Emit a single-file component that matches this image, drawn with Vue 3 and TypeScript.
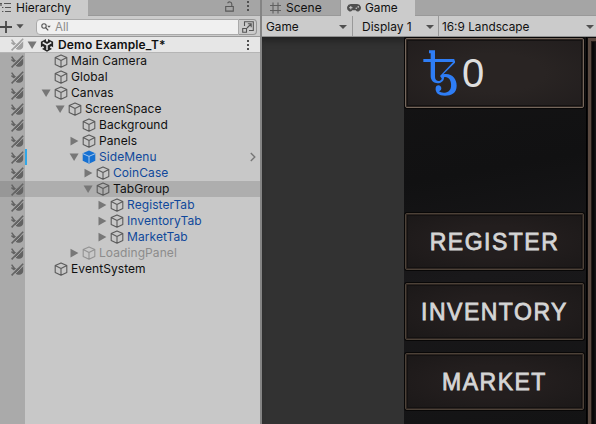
<script setup lang="ts">
interface TreeItem {
  label: string
  depth: number
  arrow?: 'open' | 'closed'
  kind?: 'prefab' | 'link' | 'muted'
  selected?: boolean
}

const items: TreeItem[] = [
  { label: 'Main Camera', depth: 1 },
  { label: 'Global', depth: 1 },
  { label: 'Canvas', depth: 1, arrow: 'open' },
  { label: 'ScreenSpace', depth: 2, arrow: 'open' },
  { label: 'Background', depth: 3 },
  { label: 'Panels', depth: 3, arrow: 'closed' },
  { label: 'SideMenu', depth: 3, arrow: 'open', kind: 'prefab' },
  { label: 'CoinCase', depth: 4, arrow: 'closed', kind: 'link' },
  { label: 'TabGroup', depth: 4, arrow: 'open', selected: true },
  { label: 'RegisterTab', depth: 5, arrow: 'closed', kind: 'link' },
  { label: 'InventoryTab', depth: 5, arrow: 'closed', kind: 'link' },
  { label: 'MarketTab', depth: 5, arrow: 'closed', kind: 'link' },
  { label: 'LoadingPanel', depth: 3, arrow: 'closed', kind: 'muted' },
  { label: 'EventSystem', depth: 1 },
]
const buttons = ['REGISTER', 'INVENTORY', 'MARKET']
</script>

<template>
  <div class="editor">
    <svg class="defs" width="0" height="0">
      <symbol id="pick" viewBox="0 0 13 13">
        <path d="M.6 1.6 4.2 6.4M.4 4.6l3 2.2" fill="none" stroke="currentColor" stroke-width="1.5" />
        <path d="M3 5.2 7.6 5.6 12.2 3v5.2c-.2 2.2-1.8 3.6-4 3.6-2 0-3.6-1-4.2-2.4z" fill="currentColor" />
        <path d="M0 11.4 11 .4" stroke="var(--slash-gap)" stroke-width="1.2" />
        <path d="M.6 12.4 12.2 .8" stroke="currentColor" stroke-width="1.6" />
        <path d="M2.3 12.6 12.8 2.4" stroke="var(--slash-gap)" stroke-width=".9" />
      </symbol>
      <symbol id="cube" viewBox="0 0 14 14">
        <path d="M7 .9 12.8 3.6v6.8L7 13.2 1.2 10.4V3.6zM1.2 3.6 7 6.4l5.8-2.8M7 6.4v6.8" fill="none" stroke="currentColor" stroke-width="1.1" stroke-linejoin="round" />
      </symbol>
      <symbol id="prefab" viewBox="0 0 14 14">
        <path d="M7 .4 13.3 3.2v7.5L7 13.8.7 10.7V3.2z" fill="#1570d2" />
        <path d="M1 3.7 7 6.4l6-2.7M7 6.4v7" fill="none" stroke="#bcd3ec" stroke-width=".9" />
      </symbol>
      <symbol id="down" viewBox="0 0 10 10"><path d="M.6 1.5h9L5.1 9z" fill="currentColor" /></symbol>
      <symbol id="right" viewBox="0 0 10 10"><path d="M1.5.7v8.8L9.4 5.1z" fill="currentColor" /></symbol>
      <symbol id="dots" viewBox="0 0 4 12"><path d="M1 1h2v2H1zM1 5h2v2H1zM1 9h2v2H1z" fill="currentColor" /></symbol>
    </svg>

    <section class="hierarchy">
      <header class="tabs">
        <div class="tab hier-tab">
          <svg width="12" height="11" viewBox="0 0 12 11"><path d="M0 1.5h2M4 1.5h7M2 5.5h1.4M5 5.5h6M2 9.5h1.4M5 9.5h6M1 2v2" stroke="#555" stroke-width="1.2" fill="none" /></svg>
          <span>Hierarchy</span>
        </div>
        <div class="head-tools">
          <svg width="9" height="11" viewBox="0 0 9 11"><path d="M.7 5.5h7.6v4.6H.7zM6.8 5.3V3a2.2 2.2 0 0 0-4.2-.8" fill="none" stroke="#585858" stroke-width="1.1" /></svg>
          <svg class="dots" width="4" height="12"><use href="#dots" /></svg>
        </div>
      </header>
      <div class="search-row">
        <svg class="plus" width="12" height="12" viewBox="0 0 12 12"><path d="M6 0v12M0 6h12" stroke="#484848" stroke-width="1.8" /></svg>
        <svg class="plus-caret" width="8" height="5" viewBox="0 0 8 5"><path d="M.4.3h7.2L4 4.6z" fill="#505050" /></svg>
        <div class="search">
          <svg width="10" height="8" viewBox="0 0 10 8"><circle cx="3" cy="3" r="2.2" fill="none" stroke="#555" stroke-width="1.1" /><path d="m4.6 4.6 2.6 2.8" stroke="#555" stroke-width="1.3" /><path d="M6.2 2.7h3.6L8 4.8z" fill="#555" /></svg>
          <span>All</span>
        </div>
        <div class="picker">
          <svg width="12" height="12" viewBox="0 0 12 12"><path d="M2.5 5V.7h8.8v8.8H7M.7 7.5h3.8v3.8H.7zM5 7l4-4M5.8 2.8h3.4v3.4" fill="none" stroke="#555" stroke-width="1.1" /></svg>
        </div>
      </div>

      <div class="tree">
        <div class="row scene">
          <div class="gutter"><svg class="pick" width="13" height="13"><use href="#pick" /></svg></div>
          <svg class="arrow" width="10" height="10"><use href="#down" /></svg>
          <svg class="unity" width="14" height="14" viewBox="0 0 14 14">
            <path d="M7 .4 13.1 3.7v6.6L7 13.7.9 10.3V3.7z" fill="#242424" />
            <path d="M7 7V12M7 7 2.7 4.5M7 7l4.3-2.5" stroke="#e6e6e6" stroke-width="1.5" />
            <path d="M7 0v3.4M.5 10.7l3.1-1.8M13.5 10.7l-3.1-1.8" stroke="#e6e6e6" stroke-width="2" />
          </svg>
          <span class="label">Demo Example_T*</span>
          <svg class="row-dots" width="4" height="12"><use href="#dots" /></svg>
        </div>
        <div v-for="item in items" :key="item.label" class="row" :class="[item.kind, 'depth-' + item.depth, { selected: item.selected }]">
          <div class="gutter"><svg class="pick" width="13" height="13"><use href="#pick" /></svg></div>
          <div class="arrow">
            <svg v-if="item.arrow" width="10" height="10"><use :href="item.arrow === 'open' ? '#down' : '#right'" /></svg>
          </div>
          <svg class="cube" width="14" height="14"><use :href="item.kind === 'prefab' ? '#prefab' : '#cube'" /></svg>
          <span class="label">{{ item.label }}</span>
          <svg v-if="item.kind === 'prefab'" class="chevron" width="6" height="10" viewBox="0 0 6 10"><path d="m.8 1 4 4-4 4" fill="none" stroke="#777" stroke-width="1.4" /></svg>
        </div>
        <div class="tree-rest"></div>
      </div>
    </section>

    <section class="game">
      <header class="tabs">
        <div class="tab scene-tab">
          <svg width="11" height="12" viewBox="0 0 11 12"><path d="M3 .5v11M8 .5v11M0 3.5h11M0 8.5h11" stroke="#606060" stroke-width="1.1" /></svg>
          <span>Scene</span>
        </div>
        <div class="tab game-tab">
          <svg width="14" height="8" viewBox="0 0 14 8"><path d="M3.8 0h6.4a3.8 3.8 0 0 1 2 7c-1.4.9-2.6.6-3.5-.7H5.3C4.4 7.6 3.2 7.9 1.8 7a3.8 3.8 0 0 1 2-7z" fill="#505050" /><path d="M2.1 3.7h3.4M3.8 2v3.4" stroke="#ccc" stroke-width="1" /><circle cx="9.3" cy="4.3" r=".8" fill="#ccc" /><circle cx="11.2" cy="2.9" r=".8" fill="#ccc" /></svg>
          <span>Game</span>
        </div>
      </header>
      <div class="toolbar">
        <div class="drop mode"><span>Game</span><i></i></div>
        <div class="drop display"><span>Display 1</span><i></i></div>
        <div class="drop aspect"><span>16:9 Landscape</span><i></i></div>
      </div>
      <div class="viewport">
        <div class="menu">
          <div class="plate coin">
            <svg class="tez" width="34" height="46" viewBox="0 0 102 138">
              <path d="M1 31.5h93" fill="none" stroke="#2e7df5" stroke-width="9" />
              <path d="M18 1h18v80c0 12 14 17 20 6v-7h7c3 24-39 29-40-1V10h-5z" fill="#2e7df5" />
              <path d="M96 30v8L61 73c25-5 40 13 40 34 0 22-16 30-35 30-19 0-30-9-28-24 3-12 18-8 17 3-1 6-5 6-7 8 8 7 34 7 36-14 3-24-14-36-28-25l-5-7z" fill="#2e7df5" />
            </svg>
            <span class="amount">0</span>
          </div>
          <div v-for="b in buttons" :key="b" class="plate button"><span>{{ b }}</span></div>
        </div>
        <div class="frame"><div class="frame-inner"></div></div>
      </div>
    </section>
  </div>
</template>

<style>
body { margin: 0; overflow: hidden; }
</style>

<style scoped>
.editor { display: flex; width: 596px; height: 424px; overflow: hidden; background: #848484; font-family: Inter, "Liberation Sans", sans-serif; font-size: 12px; color: #101010; }
.editor * { box-sizing: border-box; }
.defs { position: absolute; }
svg { display: block; flex: none; }
span { white-space: nowrap; }
.hierarchy { display: flex; flex-direction: column; width: 260px; flex: none; margin-right: 2px; background: #c8c8c8; }
.tabs { display: flex; flex: none; height: 16px; background: #a5a5a5; border-bottom: 1px solid #999; }
.tab { display: flex; align-items: center; height: 16px; line-height: 16px; }
.hier-tab { width: 88px; background: #cbcbcb; padding-bottom: 1px; }
.hier-tab span { margin-left: 4px; font-size: 12px; }
.head-tools { display: flex; margin-left: auto; padding: 1px 10px 0 0; gap: 12px; color: #505050; }
.head-tools .dots { margin-top: -1px; }
.search-row { display: flex; flex: none; align-items: center; height: 21px; padding-top: 1px; background: #cbcbcb; border-bottom: 1px solid #999; }
.plus { margin-left: 0; }
.plus-caret { margin-left: 4px; }
.search { display: flex; align-items: center; height: 16px; width: 203px; margin-left: 12px; padding-left: 4px; border: 1px solid #aaa; border-radius: 4px 0 0 4px; background: #f0f0f0; color: #8a8a8a; }
.search span { margin-left: 4px; font-size: 11.5px; }
.picker { display: grid; place-items: center; width: 18px; height: 16px; border: 1px solid #969696; border-left: 0; border-radius: 0 4px 4px 0; }
.tree { display: flex; flex-direction: column; flex: 1; }
.tree-rest { flex: 1; width: 25px; background: #aaa; }
.row { display: flex; flex: none; align-items: center; height: 16px; line-height: 16px; }
.gutter { display: flex; align-items: center; width: 25px; height: 16px; padding-left: 11px; background: #aaa; color: #636363; --slash-gap: #aaa; flex: none; }
.scene { background: #e6e6e6; border-bottom: 1px solid #b5b5b5; font-weight: 600; }
.scene .gutter { height: 15px; background: #e6e6e6; color: #a0a0a0; --slash-gap: #e6e6e6; }
.scene .arrow { margin-left: 2px; }
.unity { margin-left: 3px; }
.scene .label { margin-left: 4px; font-size: 12px; letter-spacing: .12px; }
.row-dots { margin-left: auto; margin-right: 10px; color: #505050; }
.arrow { width: 10px; flex: none; color: #777; }
.cube { margin-left: 3px; color: #5b5b5b; }
.label { margin-left: 3px; font-size: 12px; letter-spacing: .08px; }
.depth-1 .arrow { margin-left: 16px; }
.depth-2 .arrow { margin-left: 30px; }
.depth-3 .arrow { margin-left: 44px; }
.depth-4 .arrow { margin-left: 58px; }
.depth-5 .arrow { margin-left: 72px; }
.link .label, .prefab .label { color: #10489b; }
.muted .label { color: #8c8c8c; }
.muted .cube { color: #929292; }
.prefab .gutter { width: 27px; border-right: 2px solid #30a7e8; background-clip: padding-box; }
.prefab .arrow { margin-left: 42px; }
.chevron { margin-left: auto; margin-right: 4px; }
.selected { background: #aeaeae; }
.selected .gutter { background: #979797; --slash-gap: #979797; }
.game { display: flex; flex-direction: column; flex: 1; min-width: 0; }
.scene-tab { width: 79px; padding-left: 8px; border-right: 1px solid #999; }
.scene-tab span { margin-left: 5px; }
.game-tab { width: 74px; padding-left: 6px; background: #cbcbcb; }
.game-tab span { margin-left: 4px; font-size: 11.8px; }
.toolbar { display: flex; flex: none; height: 21px; background: #cbcbcb; border-bottom: 1px solid #909090; }
.drop { display: flex; align-items: center; justify-content: space-between; padding: 2px 5px 0 4px; border-right: 1px solid #999; line-height: 18px; }
.drop span { font-size: 11.8px; }
.drop i { border: 4px solid transparent; border-top: 4px solid #505050; border-bottom: 0; }
.mode { width: 91px; }
.display { width: 86px; padding-left: 9px; padding-right: 4px; }
.display span { font-size: 12px; }
.aspect { flex: 1; border: 0; padding-left: 3px; padding-right: 2px; }
.viewport { display: flex; flex: 1; padding-left: 142px; background: #323232; box-shadow: inset 0 8px 8px -6px #1c1c1c; }
.menu { display: flex; flex-direction: column; width: 182px; padding: 1px 2px 0 1px; background: linear-gradient(170deg, #151415, #111112 35%, #19181a 60%, #131314); }
.plate { width: 179px; flex: none; background: radial-gradient(ellipse, #231e1e 40%, #1b1818 100%); border: 1px solid #4d4238; box-shadow: 0 0 0 1px #080707, inset 0 0 0 1px #2c2420, inset 0 0 0 2px #141212; border-radius: 2px; }
.coin { display: flex; height: 70px; margin-bottom: 105px; padding: 11px 0 0 17px; background: radial-gradient(ellipse, #292423 40%, #211d1d 100%); border-color: #75675c; }
.amount { margin: 1px 0 0 5px; color: #dedede; font: 40px/44px "Liberation Sans", sans-serif; }
.button { display: grid; place-items: center; height: 57px; margin-bottom: 13px; color: #d5d5d5; font: 23px/56px "Liberation Sans", sans-serif; letter-spacing: 1.5px; -webkit-text-stroke: .8px #d5d5d5; }
.frame { flex: 1; border-left: 1px solid #000; padding: 1px 0 0 1px; background: #0d0b0c; }
.frame-inner { height: 100%; border: solid #594940; border-width: 3px 0 0 3px; background: linear-gradient(90deg, #080707 3px, #171315 4px); box-shadow: inset 1px 1px #241b17; }
</style>
